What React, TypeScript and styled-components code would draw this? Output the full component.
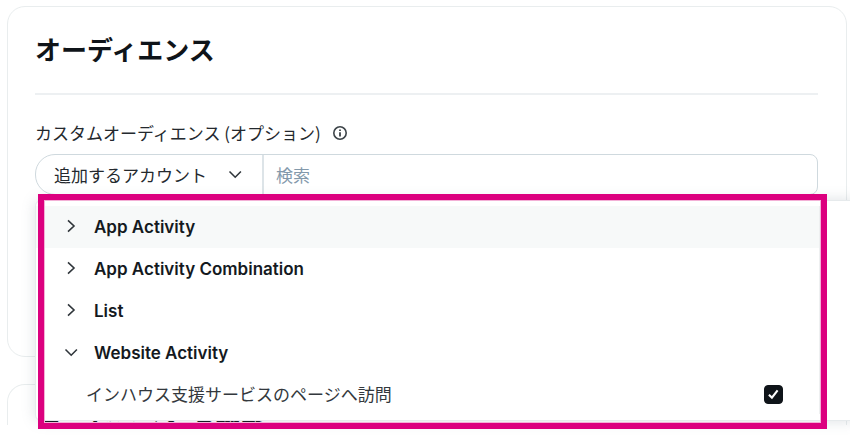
import React, { useState } from "react";
import styled, { createGlobalStyle } from "styled-components";

const GlobalStyle = createGlobalStyle`
  * { box-sizing: border-box; }
  body {
    margin: 0;
    background: #fff;
    color: #0f1419;
    font-family: "Noto Sans CJK JP", sans-serif;
    font-size: 17px;
    line-height: 24px;
  }
`;

const Page = styled.main`
  display: flex;
  flex-direction: column;
  gap: 27px;
  min-height: 100vh;
  padding: 6px 3px 0 7px;
  overflow: hidden;
`;

const Card = styled.section<{ $cut?: boolean }>`
  padding: 24px 28px 0 27px;
  border: 1px solid #e9edee;
  border-radius: 18px;
  min-height: ${(p) => (p.$cut ? "0" : "351px")};
  ${(p) =>
    p.$cut &&
    `
    max-height: 41px;
    overflow: hidden;
    border-bottom: 0;
    border-radius: 18px 18px 0 0;
  `}
`;

const Title = styled.h2`
  margin: 0;
  font-size: 26px;
  line-height: 36px;
  font-weight: 700;
`;

const Divider = styled.hr`
  margin: 26px 0;
  border: 0;
  border-top: 2px solid #edf0f2;
`;

const LabelRow = styled.div`
  display: flex;
  align-items: center;
  gap: 11px;
  margin-bottom: 9px;
  color: #24292e;
`;

const InfoButton = styled.button`
  display: flex;
  padding: 0;
  border: 0;
  background: none;
  color: #3c4348;
`;

const Field = styled.div`
  position: relative;
`;

const InputGroup = styled.div`
  display: flex;
  height: 41px;
  border: 1px solid #cfd9de;
  border-radius: 20px 8px 8px 20px;
`;

const SelectBox = styled.div`
  display: grid;
  align-items: center;
  width: 228px;
  border-right: 2px solid #dde4e8;

  & > * {
    grid-area: 1 / 1;
  }

  svg {
    justify-self: end;
    margin-right: 18px;
    pointer-events: none;
  }
`;

const Select = styled.select`
  appearance: none;
  width: 100%;
  padding: 0 0 0 18px;
  border: 0;
  outline: 0;
  background: none;
  color: #24292e;
  font: inherit;
`;

const SearchInput = styled.input`
  flex: 1;
  min-width: 0;
  padding: 0 12px;
  border: 0;
  outline: 0;
  background: none;
  font: inherit;

  &::placeholder {
    color: #8399ab;
    opacity: 1;
  }
`;

const Menu = styled.div`
  position: absolute;
  z-index: 1;
  top: 46px;
  left: 0;
  right: -40px;
  padding: 5px 36px 4px 0;
  border: 1px solid #e6eaec;
  border-radius: 6px;
  background: #fff;
  box-shadow: 0 0 14px rgba(101, 119, 134, 0.22);
`;

const MenuList = styled.ul`
  margin: 0;
  padding: 0;
  list-style: none;
  border-right: 2px solid #eef0f1;
`;

const GroupButton = styled.button<{ $active?: boolean }>`
  display: flex;
  align-items: center;
  gap: 14px;
  width: 100%;
  height: 42px;
  padding: 0 26px;
  border: 0;
  background: ${(p) => (p.$active ? "#f7f9f9" : "transparent")};
  color: #14191e;
  font-family: Inter, sans-serif;
  font-size: 17px;
  font-weight: 600;
  text-align: left;
`;

const OptionLabel = styled.label`
  display: flex;
  align-items: center;
  justify-content: space-between;
  height: 40px;
  margin-bottom: 2px;
  padding: 0 36px 0 50px;
  color: #33383d;
`;

const CheckWrap = styled.span`
  display: grid;

  & > * {
    grid-area: 1 / 1;
  }

  svg {
    pointer-events: none;
  }
`;

const Checkbox = styled.input`
  appearance: none;
  width: 19px;
  height: 19px;
  margin: 0;
  border: 1px solid #0f1419;
  border-radius: 4px;

  &:checked {
    background: #0f1419;
  }
`;

const HighlightFrame = styled.div`
  position: absolute;
  top: -7px;
  bottom: -9px;
  left: 2px;
  right: 30px;
  border: 6px solid #dc007f;
  box-shadow: inset 0 0 0 1px #f3b0d6;
  pointer-events: none;
`;

function Chevron({ down }: { down?: boolean }) {
  return (
    <svg width="18" height="18" viewBox="0 0 18 18" fill="none" stroke="#30363b" strokeWidth="1.6" aria-hidden="true">
      <path d={down ? "M3.5 5.5 L9.2 11.2 L14.9 5.5" : "M6 2.3 L12 8 L6 13.7"} />
    </svg>
  );
}

const groups = [
  { name: "App Activity", active: true },
  { name: "App Activity Combination" },
  { name: "List" },
  { name: "Website Activity", open: true },
];

export default function App() {
  const [checked, setChecked] = useState(true);
  return (
    <>
      <GlobalStyle />
      <Page>
        <Card>
          <Title>オーディエンス</Title>
          <Divider />
          <LabelRow>
            <label htmlFor="audience">カスタムオーディエンス (オプション)</label>
            <InfoButton type="button" aria-label="情報">
              <svg width="16" height="16" viewBox="0 0 16 16" fill="none" stroke="currentColor">
                <circle cx="8" cy="8" r="6.2" strokeWidth="1.6" />
                <path d="M8 7.2 V11.5 M8 4.4 V5.9" strokeWidth="1.8" />
              </svg>
            </InfoButton>
          </LabelRow>
          <Field>
            <InputGroup>
              <SelectBox>
                <Select aria-label="アカウント">
                  <option>追加するアカウント</option>
                </Select>
                <Chevron down />
              </SelectBox>
              <SearchInput id="audience" placeholder="検索" />
            </InputGroup>
            <Menu>
              <MenuList>
                {groups.map((g) => (
                  <li key={g.name}>
                    <GroupButton type="button" $active={g.active} aria-expanded={!!g.open}>
                      <Chevron down={g.open} />
                      {g.name}
                    </GroupButton>
                  </li>
                ))}
                <li>
                  <OptionLabel>
                    インハウス支援サービスのページへ訪問
                    <CheckWrap>
                      <Checkbox type="checkbox" checked={checked} onChange={(e) => setChecked(e.target.checked)} />
                      {checked && (
                        <svg width="19" height="19" viewBox="0 0 19 19" fill="none" stroke="#fff" strokeWidth="2.1" aria-hidden="true">
                          <path d="M4.9 9.8 L7.9 12.6 L13.6 5.3" />
                        </svg>
                      )}
                    </CheckWrap>
                  </OptionLabel>
                </li>
              </MenuList>
              <HighlightFrame />
            </Menu>
          </Field>
        </Card>
        <Card $cut>
          <Title>ターゲティング機能</Title>
        </Card>
      </Page>
    </>
  );
}
